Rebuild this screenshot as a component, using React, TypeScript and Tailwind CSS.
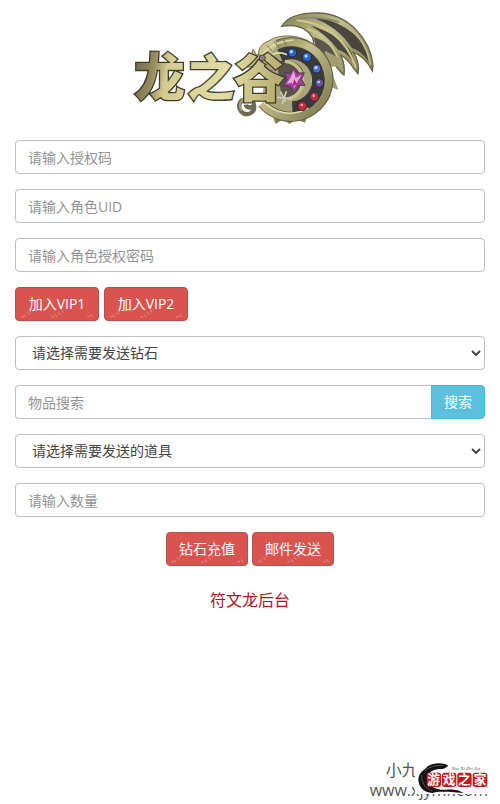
import React from "react";

const field =
  "block h-[34px] w-full rounded border border-[#bfbfc2] bg-white px-3 text-sm text-[#444] placeholder:text-[#949494] outline-none focus:border-sky-400";

const Logo = () => (
  <svg
    viewBox="0 0 750 375"
    className="w-[250px]"
    role="img"
    aria-label="龙之谷"
  >
    <defs>
      <linearGradient id="gold" x1="0" y1="0" x2="1" y2="1">
        <stop offset="0" stopColor="#85814f" />
        <stop offset="0.4" stopColor="#c2bf8a" />
        <stop offset="1" stopColor="#77744c" />
      </linearGradient>
      <linearGradient id="letter" gradientUnits="userSpaceOnUse" x1="25" y1="180" x2="485" y2="260">
        <stop offset="0" stopColor="#6f6848" />
        <stop offset="0.13" stopColor="#958c5e" />
        <stop offset="0.22" stopColor="#d3cc93" />
        <stop offset="0.6" stopColor="#e2dda6" />
        <stop offset="1" stopColor="#b0a566" />
      </linearGradient>
    </defs>

    {/* wing */}
    <g transform="translate(465 15)">
      <path
        d="M5 52C22 24 60 10 120 12C205 18 270 88 279 168L277 186C266 164 246 138 220 130C234 150 238 172 234 194C220 180 208 152 182 138C192 158 195 176 192 198C178 190 172 168 150 158C132 140 116 120 100 112C106 74 66 40 5 52Z"
        fill="url(#gold)"
        stroke="#68664a"
        strokeWidth="4"
      />
      <path d="M98 26C160 28 218 62 246 102C256 118 264 138 266 158C248 132 232 122 216 118C190 76 150 44 98 26Z" fill="#48463f" />
      <path d="M92 50C140 62 192 94 210 124C216 136 222 150 224 164C206 138 190 126 174 122C150 90 122 68 92 50Z" fill="#4b493f" />
      <path d="M100 84C132 92 160 118 172 138L182 172C158 146 128 138 106 108Z" fill="#5b5550" />
      <path d="M14 46C50 22 120 20 178 40" fill="none" stroke="#8b8a78" strokeWidth="6" />
      <path d="M50 34C130 40 200 86 228 178M78 58C130 74 168 112 186 184" fill="none" stroke="#cbc88f" strokeWidth="6" />
      <path d="M180 42C232 66 262 112 272 168" fill="none" stroke="#b9b681" strokeWidth="6" />
    </g>

    {/* tail spikes and fins around the ring */}
    <path d="M600 140L640 160L656 204L634 186L615 190L640 258L620 250L616 276L600 300L570 330Z" fill="#a19d70" />
    <path d="M440 328L452 360L474 346L494 360L512 346L540 356L550 330Z" fill="#827f57" />
    <path
      d="M400 150C404 118 420 118 436 108C462 92 512 90 552 112L540 130L470 135L425 180Z"
      fill="#c9c590"
      stroke="#77744f"
      strokeWidth="3"
    />

    {/* coiled body with the gem band */}
    <path d="M420 170L458 122C500 120 560 160 560 228C560 290 520 330 480 330L412 298Z" fill="#a8a478" />
    <path d="M456 176C480 160 520 170 534 200C546 240 520 276 470 284Z" fill="#5a5548" />
    <g fill="none">
      <path d="M458 122A112 112 0 1 1 412 298" stroke="#5f5d41" strokeWidth="30" />
      <path d="M458 122A112 112 0 1 1 412 298" stroke="url(#gold)" strokeWidth="24" />
      <path d="M465 154A82 82 0 1 1 502 311" stroke="#3b3a3a" strokeWidth="38" />
      <path d="M480 172A58 58 0 0 1 490 286" stroke="#c6c18d" strokeWidth="10" />
      <path d="M405 160C425 132 452 112 505 108M412 172C440 146 462 140 486 152M410 288C444 326 500 342 550 312" stroke="#dfdbab" strokeWidth="5" />
      <path d="M426 124L442 142M448 112L462 132M474 104L484 124" stroke="#7e7b52" strokeWidth="3" />
      <path d="M466 262L482 292M484 262L472 300M456 280L500 284" stroke="#cfcdb9" strokeWidth="5" />
    </g>
    <path
      d="M372 286C344 284 336 304 348 322C364 340 392 326 387 304C380 314 364 312 362 302"
      fill="none"
      stroke="#6c6a52"
      strokeWidth="13"
    />
    <path d="M372 284C346 282 338 304 350 320" fill="none" stroke="#a6a489" strokeWidth="5" />

    {/* horned head above the last character */}
    <path d="M366 190C356 170 362 156 380 150L384 136L394 152C412 152 424 164 428 180Z" fill="#bab681" stroke="#6f6c49" strokeWidth="3" />

    <g
      fill="url(#letter)"
      stroke="#403e2c"
      strokeWidth="8"
      paintOrder="stroke"
      fontWeight="900"
      className="font-['Noto_Sans_CJK_SC',sans-serif]"
    >
      <text x="28" y="276" fontSize="152">龙</text>
      <text x="186" y="273" fontSize="142">之</text>
      <text x="326" y="280" fontSize="154">谷</text>
    </g>
    <circle cx="412" cy="162" r="9" fill="#94768a" stroke="#504536" strokeWidth="3" />

    {/* gems */}
    <path d="M505 190L516 208L538 206L530 226L540 244L520 244L508 268L496 248L474 244L486 226L478 204L496 210Z" fill="#9c4496" stroke="#5b3459" strokeWidth="3" />
    <path d="M506 200L512 222L530 212L518 232L508 252L500 236L484 240L496 222Z" fill="#e3a6df" />
    <path d="M508 226L516 240L500 250Z" fill="#c91f86" />
    <g stroke="#222842" strokeWidth="3">
      <circle cx="502" cy="146" r="13" fill="#2868c3" />
      <circle cx="546" cy="159" r="14" fill="#2769c4" />
      <circle cx="575" cy="194" r="13" fill="#4b6bc3" />
      <circle cx="583" cy="237" r="13" fill="#70519c" />
      <circle cx="568" cy="278" r="14" fill="#b52f41" />
      <circle cx="532" cy="306" r="14" fill="#c52c34" />
    </g>
    <g fill="#a9d5ff">
      <circle cx="499" cy="143" r="5" />
      <circle cx="543" cy="156" r="5" />
      <circle cx="573" cy="191" r="5" />
      <circle cx="581" cy="234" r="4" />
    </g>
    <g fill="#f2a0a0">
      <circle cx="566" cy="275" r="4" />
      <circle cx="530" cy="303" r="4" />
    </g>
  </svg>
);

const Marks = () => (
  <svg
    viewBox="0 0 82 34"
    fill="none"
    stroke="#f0a8a0"
    aria-hidden="true"
    className="pointer-events-none absolute inset-0 h-full w-full opacity-70"
  >
    <path d="M3 31l3-1M6 28l2 3M9 26l3 2M12 23l1 3M35 31l3-1M39 28l2 3M42 26l3 2M46 23l1 3M73 31l3-1M77 28l2 3" />
  </svg>
);

const RedButton = ({ children }: { children: React.ReactNode }) => (
  <button
    type="button"
    className="relative h-[34px] rounded border border-[#b9504e] bg-[#d9534f] px-3 text-sm text-white hover:bg-[#c9302c]"
  >
    {children}
    <Marks />
  </button>
);

const Select = ({ label }: { label: string }) => (
  <div className="relative">
    <select aria-label={label} className={`${field} appearance-none pl-4`}>
      <option>{label}</option>
    </select>
    <svg
      viewBox="0 0 10 6"
      fill="none"
      stroke="#444"
      strokeWidth="2"
      aria-hidden="true"
      className="pointer-events-none absolute top-3.5 right-1 w-2.5"
    >
      <path d="M1 1l4 4 4-4" />
    </svg>
  </div>
);

const SiteBadge = () => (
  <svg viewBox="0 0 219 99" className="absolute right-3 bottom-2.5 w-[73px]" role="img" aria-label="游戏之家">
    <rect width="219" height="99" fill="#fff" />
    <path
      d="M100 14C84 4 56 4 38 16C30 26 12 34 10 54C10 78 26 94 52 96C70 90 92 92 146 96C132 86 112 84 92 86C66 88 40 76 36 56C34 38 52 26 72 24C84 26 92 20 100 14Z"
      fill="#111"
    />
    <path d="M20 42C20 66 30 84 54 90M30 30C40 18 60 12 84 14" fill="none" stroke="#777" strokeWidth="2" />
    <text x="110" y="27" fontSize="15" fill="#555" className="font-['Liberation_Serif',serif] italic">
      You Xi Zhi Jia
    </text>
    <g fill="#c9171e">
      <rect x="35" y="35" width="43" height="43" rx="8" />
      <rect x="81" y="35" width="43" height="43" rx="8" />
      <rect x="127" y="35" width="43" height="43" rx="8" />
      <rect x="173" y="35" width="44" height="43" rx="8" />
    </g>
    <g fill="#fff" fontSize="38" fontWeight="700" className="font-['Noto_Sans_CJK_SC',sans-serif]">
      <text x="37" y="70">游</text>
      <text x="83" y="70">戏</text>
      <text x="129" y="70">之</text>
      <text x="176" y="70">家</text>
    </g>
  </svg>
);

export default function App() {
  return (
    <div className="flex min-h-screen flex-col bg-white font-['Open_Sans','Noto_Sans_CJK_SC',sans-serif]">
      <header className="flex justify-center pt-1">
        <Logo />
      </header>

      <form className="flex flex-col gap-[15px] px-[15px] pt-[11px]">
        <input aria-label="授权码" placeholder="请输入授权码" className={field} />
        <input aria-label="角色UID" placeholder="请输入角色UID" className={field} />
        <input aria-label="角色授权密码" type="password" placeholder="请输入角色授权密码" className={field} />
        <div className="grid grid-cols-[84px_84px] gap-[5px]">
          <RedButton>加入VIP1</RedButton>
          <RedButton>加入VIP2</RedButton>
        </div>
        <Select label="请选择需要发送钻石" />
        <div className="flex">
          <input aria-label="物品搜索" placeholder="物品搜索" className={`${field} rounded-r-none border-r-0`} />
          <button
            type="button"
            className="h-[34px] shrink-0 rounded-r border border-[#46b8da] bg-[#5bc0de] px-3 text-sm text-white hover:bg-[#31b0d5]"
          >
            搜索
          </button>
        </div>
        <Select label="请选择需要发送的道具" />
        <input aria-label="数量" placeholder="请输入数量" className={field} />
        <div className="flex justify-center gap-1">
          <RedButton>钻石充值</RedButton>
          <RedButton>邮件发送</RedButton>
        </div>
      </form>

      <p className="mt-[22px] text-center text-base text-[#b3121d]">符文龙后台</p>

      <footer className="relative mt-auto flex justify-end pr-3 pb-1">
        <div className="text-base leading-5 text-[#555]">
          <p className="pl-4">小九</p>
          <p>www.xjymf.com</p>
        </div>
        <SiteBadge />
      </footer>
    </div>
  );
}
